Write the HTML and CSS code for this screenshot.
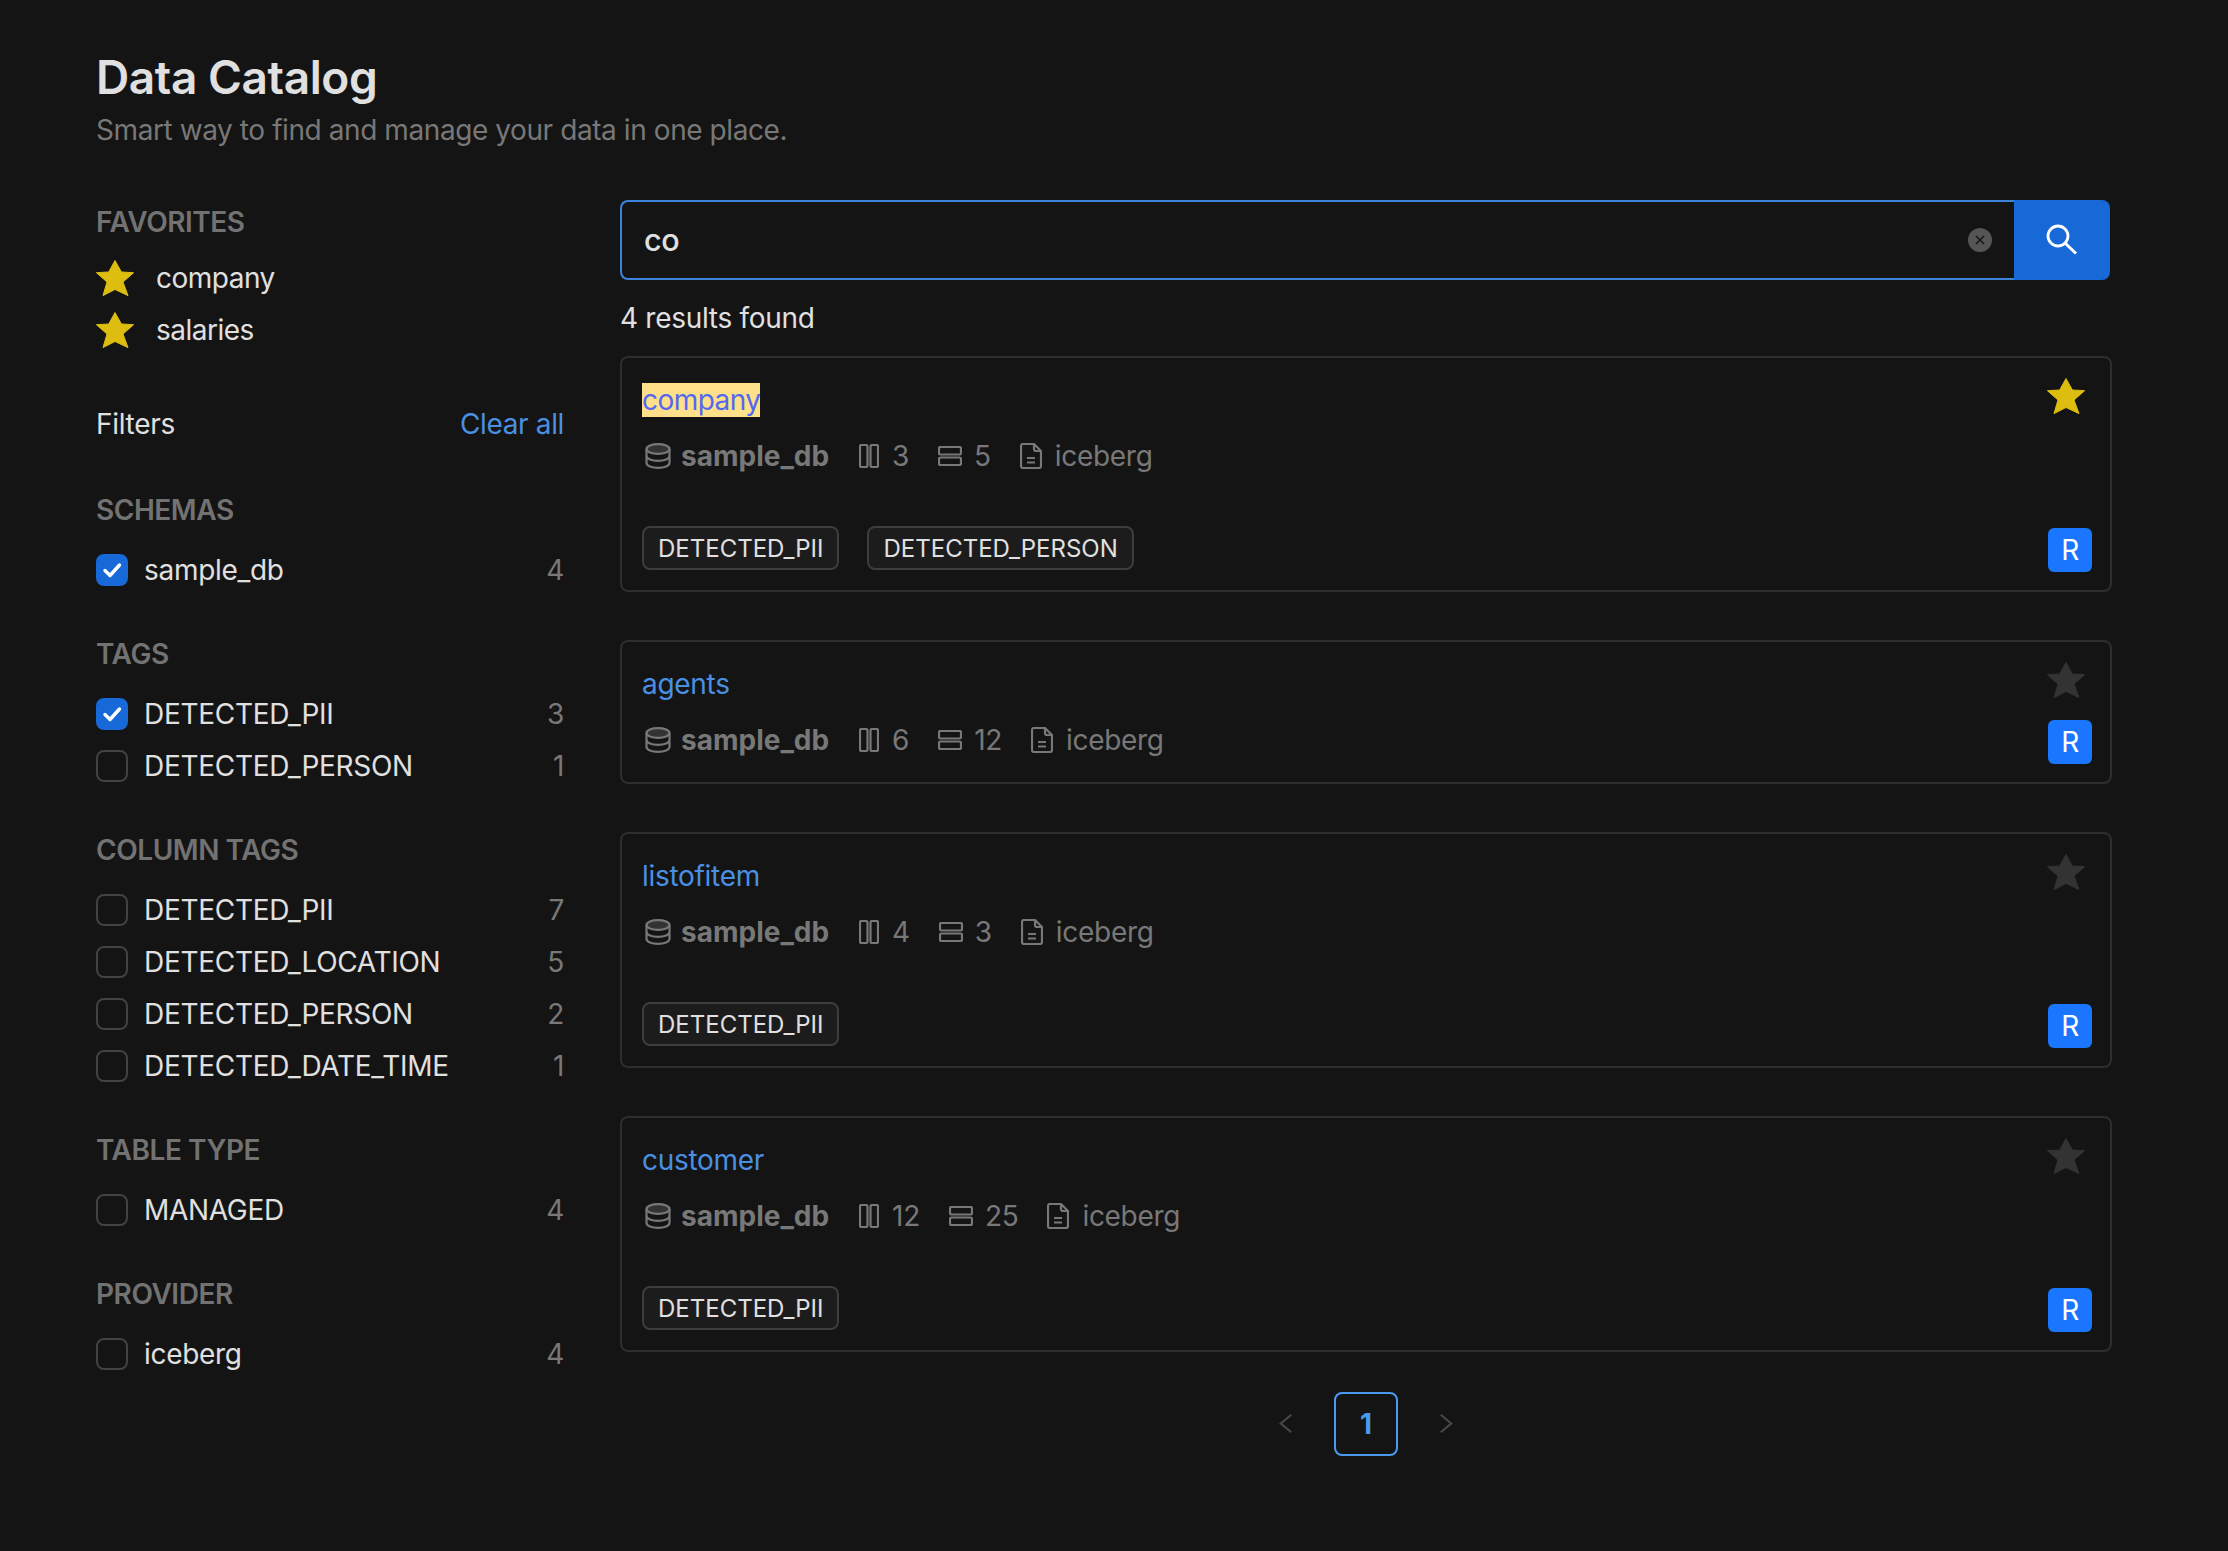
FILE: index.html
```html
<!DOCTYPE html>
<html lang="en">
<head>
<meta charset="utf-8">
<title>Data Catalog</title>
<link rel="stylesheet" href="styles.css">
</head>
<body>
<svg class="sprite" xmlns="http://www.w3.org/2000/svg">
  <symbol id="star" viewBox="0 0 38 36"><path d="M19 .5 25.400 12 37.600 12.700 27 22 32 35.600 19 29.500 7 35.600 11 22 .4 12.700 12.700 12Z" stroke="currentColor" stroke-width="1" stroke-linejoin="round" fill="currentColor"/></symbol>
  <symbol id="db" viewBox="0 0 26 26"><ellipse cx="13" cy="6" rx="11.500" ry="4.800" fill="#333" stroke="currentColor" stroke-width="2.200"/><path d="M1.500 6v14c0 2.700 5.200 4.800 11.500 4.800s11.500-2.100 11.500-4.800V6M1.500 13c0 2.700 5.200 4.800 11.500 4.800s11.500-2.100 11.500-4.800" fill="none" stroke="currentColor" stroke-width="2.200"/></symbol>
  <symbol id="cols" viewBox="0 0 20 24"><rect x="1" y="1" width="7.500" height="22" rx="1.500" fill="none" stroke="currentColor" stroke-width="2.200"/><rect x="11.500" y="1" width="7.500" height="22" rx="1.500" fill="none" stroke="currentColor" stroke-width="2.200"/></symbol>
  <symbol id="rows" viewBox="0 0 24 20"><rect x="1" y="1" width="22" height="7.500" rx="1.500" fill="none" stroke="currentColor" stroke-width="2.200"/><rect x="1" y="11.500" width="22" height="7.500" rx="1.500" fill="none" stroke="currentColor" stroke-width="2.200"/></symbol>
  <symbol id="file" viewBox="0 0 22 26"><path d="M14 1H3a2 2 0 0 0-2 2v20a2 2 0 0 0 2 2h16a2 2 0 0 0 2-2V8ZM14 1v5a2 2 0 0 0 2 2h5M7 15h8M7 19.500h8" fill="none" stroke="currentColor" stroke-width="2.200"/></symbol>
  <symbol id="check" viewBox="0 0 32 32"><path d="M9 16.500 14 21.500 23.500 11" fill="none" stroke="#fff" stroke-width="3.400" stroke-linecap="round" stroke-linejoin="round"/></symbol>
</svg>
<div class="page">
  <header class="head">
    <h1 class="title">Data Catalog</h1>
    <p class="subtitle">Smart way to find and manage your data in one place.</p>
  </header>
  <div class="layout">
    <aside class="sidebar">
      <section class="favorites">
        <h2 class="group-title">FAVORITES</h2>
        <ul class="fav-list">
          <li class="fav"><svg class="star-icon gold"><use href="#star"/></svg><span>company</span></li>
          <li class="fav"><svg class="star-icon gold"><use href="#star"/></svg><span>salaries</span></li>
        </ul>
      </section>
      <div class="filters-head"><span>Filters</span><a class="clear">Clear all</a></div>
      <section class="group">
        <h2 class="group-title">SCHEMAS</h2>
        <ul class="opts">
          <li class="opt"><span class="box on"><svg><use href="#check"/></svg></span><span class="opt-name">sample_db</span><span class="count">4</span></li>
        </ul>
      </section>
      <section class="group">
        <h2 class="group-title">TAGS</h2>
        <ul class="opts">
          <li class="opt"><span class="box on"><svg><use href="#check"/></svg></span><span class="opt-name">DETECTED_PII</span><span class="count">3</span></li>
          <li class="opt"><span class="box"></span><span class="opt-name">DETECTED_PERSON</span><span class="count">1</span></li>
        </ul>
      </section>
      <section class="group">
        <h2 class="group-title">COLUMN TAGS</h2>
        <ul class="opts">
          <li class="opt"><span class="box"></span><span class="opt-name">DETECTED_PII</span><span class="count">7</span></li>
          <li class="opt"><span class="box"></span><span class="opt-name">DETECTED_LOCATION</span><span class="count">5</span></li>
          <li class="opt"><span class="box"></span><span class="opt-name">DETECTED_PERSON</span><span class="count">2</span></li>
          <li class="opt"><span class="box"></span><span class="opt-name">DETECTED_DATE_TIME</span><span class="count">1</span></li>
        </ul>
      </section>
      <section class="group">
        <h2 class="group-title">TABLE TYPE</h2>
        <ul class="opts">
          <li class="opt"><span class="box"></span><span class="opt-name">MANAGED</span><span class="count">4</span></li>
        </ul>
      </section>
      <section class="group">
        <h2 class="group-title">PROVIDER</h2>
        <ul class="opts">
          <li class="opt"><span class="box"></span><span class="opt-name">iceberg</span><span class="count">4</span></li>
        </ul>
      </section>
    </aside>
    <main class="main">
      <div class="search">
        <div class="search-input">
          <span class="query">co</span>
          <span class="clear-x"><svg viewBox="0 0 24 24"><path d="M8 8l8 8M16 8l-8 8" stroke="#141414" stroke-width="1.400" fill="none"/></svg></span>
        </div>
        <button class="search-btn"><svg viewBox="0 0 40 40"><circle cx="16" cy="16" r="10" fill="none" stroke="#fff" stroke-width="2.800"/><path d="M23.500 23.500 34 33.500" stroke="#fff" stroke-width="3" fill="none"/></svg></button>
      </div>
      <p class="results">4 results found</p>
      <div class="cards">
        <article class="card">
          <div class="card-body">
            <div class="card-title"><mark class="hit">company</mark></div>
            <div class="meta">
              <span class="m-db"><svg class="i-db"><use href="#db"/></svg><b>sample_db</b></span>
              <span class="m"><svg class="i-cols"><use href="#cols"/></svg>3</span>
              <span class="m"><svg class="i-rows"><use href="#rows"/></svg>5</span>
              <span class="m"><svg class="i-file"><use href="#file"/></svg>iceberg</span>
            </div>
            <div class="tags"><span class="tag">DETECTED_PII</span><span class="tag">DETECTED_PERSON</span></div>
          </div>
          <div class="card-side"><svg class="star-icon gold"><use href="#star"/></svg><span class="badge">R</span></div>
        </article>
        <article class="card">
          <div class="card-body">
            <div class="card-title">agents</div>
            <div class="meta">
              <span class="m-db"><svg class="i-db"><use href="#db"/></svg><b>sample_db</b></span>
              <span class="m"><svg class="i-cols"><use href="#cols"/></svg>6</span>
              <span class="m"><svg class="i-rows"><use href="#rows"/></svg>12</span>
              <span class="m"><svg class="i-file"><use href="#file"/></svg>iceberg</span>
            </div>
          </div>
          <div class="card-side"><svg class="star-icon dim"><use href="#star"/></svg><span class="badge">R</span></div>
        </article>
        <article class="card">
          <div class="card-body">
            <div class="card-title">listofitem</div>
            <div class="meta">
              <span class="m-db"><svg class="i-db"><use href="#db"/></svg><b>sample_db</b></span>
              <span class="m"><svg class="i-cols"><use href="#cols"/></svg>4</span>
              <span class="m"><svg class="i-rows"><use href="#rows"/></svg>3</span>
              <span class="m"><svg class="i-file"><use href="#file"/></svg>iceberg</span>
            </div>
            <div class="tags"><span class="tag">DETECTED_PII</span></div>
          </div>
          <div class="card-side"><svg class="star-icon dim"><use href="#star"/></svg><span class="badge">R</span></div>
        </article>
        <article class="card">
          <div class="card-body">
            <div class="card-title">customer</div>
            <div class="meta">
              <span class="m-db"><svg class="i-db"><use href="#db"/></svg><b>sample_db</b></span>
              <span class="m"><svg class="i-cols"><use href="#cols"/></svg>12</span>
              <span class="m"><svg class="i-rows"><use href="#rows"/></svg>25</span>
              <span class="m"><svg class="i-file"><use href="#file"/></svg>iceberg</span>
            </div>
            <div class="tags"><span class="tag">DETECTED_PII</span></div>
          </div>
          <div class="card-side"><svg class="star-icon dim"><use href="#star"/></svg><span class="badge">R</span></div>
        </article>
      </div>
      <nav class="pager">
        <span class="chev"><svg viewBox="0 0 16 24"><path d="M14 2 2 12l12 10" fill="none" stroke="#484848" stroke-width="2.400"/></svg></span>
        <span class="page-num">1</span>
        <span class="chev"><svg viewBox="0 0 16 24"><path d="M2 2l12 10L2 22" fill="none" stroke="#484848" stroke-width="2.400"/></svg></span>
      </nav>
    </main>
  </div>
</div>
</body>
</html>
```
FILE: styles.css
```css
* { box-sizing: border-box; }
html, body { margin: 0; padding: 0; }
body {
  background: #141414;
  color: #e0e0e0;
  font-family: Inter, "Liberation Sans", sans-serif;
  font-size: 28px;
  line-height: 40px;
  letter-spacing: -0.3px;
  min-height: 1551px;
}
h1, h2, p, ul { margin: 0; padding: 0; }
ul { list-style: none; }
.sprite { display: none; }

.page { padding: 47px 116px 0 96px; }
.title { font-size: 46px; line-height: 60px; font-weight: 600; color: #e0e0e0; letter-spacing: -0.4px; }
.subtitle { color: #787878; line-height: 44px; margin-top: 1px; letter-spacing: -0.42px; }
.head { margin-bottom: 48px; }

.layout { display: flex; gap: 56px; align-items: flex-start; }
.sidebar { width: 468px; flex: none; }
.main { flex: 1; min-width: 0; }

.group-title { font-size: 28px; line-height: 44px; font-weight: 600; color: #727272; letter-spacing: -0.45px; }
.favorites .group-title { margin-bottom: 14px; }
.fav-list { display: flex; flex-direction: column; gap: 12px; }
.fav { display: flex; align-items: center; gap: 22px; height: 40px; letter-spacing: -0.5px; }
.star-icon { width: 38px; height: 36px; display: block; flex: none; }
.gold { color: #dcbd10; }
.dim { color: #333333; }

.filters-head { display: flex; justify-content: space-between; margin: 54px 0 44px; }
.clear { color: #4a90e2; letter-spacing: -0.35px; }

.group { margin-bottom: 44px; }
.group > .group-title { margin-bottom: 20px; }
.opts { display: flex; flex-direction: column; gap: 16px; }
.opt { display: flex; align-items: center; height: 36px; }
.box {
  width: 32px; height: 32px; flex: none; border: 2px solid #424242;
  border-radius: 8px; margin-right: 16px;
}
.box.on { background: #1769d8; border-color: #1769d8; position: relative; }
.box.on svg { position: absolute; left: -2px; top: -2px; width: 32px; height: 32px; }
.opt-name { flex: 1; }
.count { color: #787878; }

.search { display: flex; height: 80px; margin-right: 2px; }
.search-input {
  flex: 1; display: flex; align-items: center; justify-content: space-between;
  border: 2px solid #3a84dc; border-right: 0; border-radius: 8px 0 0 8px;
  padding: 0 22px 0 22px;
}
.query { font-size: 30.5px; font-weight: 500; }
.clear-x { width: 24px; height: 24px; background: #555; border-radius: 50%; display: block; }
.clear-x svg { display: block; width: 24px; height: 24px; }
.search-btn {
  width: 96px; border: 0; padding: 0; background: #1769d8; border-radius: 0 8px 8px 0;
  display: flex; align-items: center; justify-content: center;
}
.search-btn svg { width: 40px; height: 40px; display: block; }
.results { margin: 18px 0; }

.cards { display: flex; flex-direction: column; gap: 48px; }
.card {
  display: flex; justify-content: space-between;
  border: 2px solid #2e2e2e; border-radius: 8px;
  padding: 22px 18px 18px 20px;
}
.card-body { padding-bottom: 4px; }
.card-title { color: #4a90e2; height: 40px; line-height: 40px; }
.hit { background: #ffe08a; color: #5468f0; letter-spacing: -0.55px; }
.meta { display: flex; align-items: center; height: 40px; margin-top: 16px; color: #787878; padding-left: 3px; gap: 29px; }
.m-db, .m { display: flex; align-items: center; gap: 13px; }
.m-db { gap: 10px; margin-right: 1px; }
.m-db b { font-weight: 700; letter-spacing: 0; }
.i-db { width: 26px; height: 26px; }
.i-cols { width: 20px; height: 24px; }
.i-rows { width: 24px; height: 20px; margin-right: -1px; }
.i-file { width: 22px; height: 26px; }
.tags { display: flex; gap: 28px; margin: 50px 0 -2px; }
.tag {
  display: flex; align-items: center; height: 44px; padding: 1px 14px 0 14px;
  font-size: 24px; letter-spacing: 0; background: #1c1c1c; border: 2px solid #3d3d3d; border-radius: 8px;
}
.card-side { display: flex; flex-direction: column; justify-content: space-between; align-items: flex-end; }
.card-side .star-icon { margin: -2px 7px 0 0; }
.badge {
  width: 44px; height: 44px; background: #1a76ff; color: #fff; border-radius: 6px;
  display: flex; align-items: center; justify-content: center; font-size: 28px;
}

.pager { display: flex; justify-content: center; gap: 16px; margin-top: 40px; }
.chev { width: 64px; height: 64px; display: flex; align-items: center; justify-content: center; padding-bottom: 2px; }
.chev svg { width: 14px; height: 21px; display: block; }
.page-num {
  width: 64px; height: 64px; border: 2px solid #4a9af0; border-radius: 8px;
  display: flex; align-items: center; justify-content: center;
  color: #4a9af0; font-weight: 700;
}
```
